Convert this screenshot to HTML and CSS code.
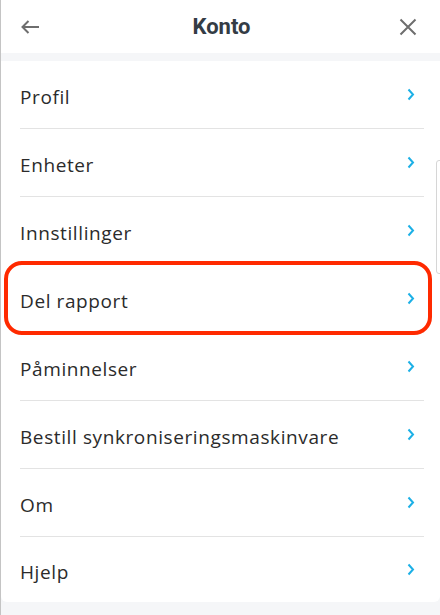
FILE: index.html
```html
<!DOCTYPE html>
<html lang="no">
<head>
<meta charset="utf-8">
<link rel="stylesheet" href="styles.css">
</head>
<body>
<div class="screen">
  <header class="topbar">
    <svg class="icon back" width="20" height="16" viewBox="0 0 20 16"><path d="M19 8H2.5M8.5 2 2.5 8l6 6" fill="none" stroke="#6e6e6e" stroke-width="2"/></svg>
    <h1 class="title">Konto</h1>
    <svg class="icon close" width="18" height="18" viewBox="0 0 18 18"><path d="M1.5 1.5l15 15M16.5 1.5l-15 15" fill="none" stroke="#6e6e6e" stroke-width="2"/></svg>
  </header>
  <div class="band"></div>
  <ul class="list">
    <li class="row"><span>Profil</span><svg class="chev" width="8" height="13" viewBox="0 0 8 13"><path d="M1.5 1.5 6 6.5l-4.5 5" fill="none" stroke="#1cb0e6" stroke-width="2"/></svg></li>
    <li class="row"><span>Enheter</span><svg class="chev" width="8" height="13" viewBox="0 0 8 13"><path d="M1.5 1.5 6 6.5l-4.5 5" fill="none" stroke="#1cb0e6" stroke-width="2"/></svg></li>
    <li class="row"><span>Innstillinger</span><svg class="chev" width="8" height="13" viewBox="0 0 8 13"><path d="M1.5 1.5 6 6.5l-4.5 5" fill="none" stroke="#1cb0e6" stroke-width="2"/></svg></li>
    <li class="row highlighted"><span>Del rapport</span><svg class="chev" width="8" height="13" viewBox="0 0 8 13"><path d="M1.5 1.5 6 6.5l-4.5 5" fill="none" stroke="#1cb0e6" stroke-width="2"/></svg></li>
    <li class="row"><span>Påminnelser</span><svg class="chev" width="8" height="13" viewBox="0 0 8 13"><path d="M1.5 1.5 6 6.5l-4.5 5" fill="none" stroke="#1cb0e6" stroke-width="2"/></svg></li>
    <li class="row"><span>Bestill synkroniseringsmaskinvare</span><svg class="chev" width="8" height="13" viewBox="0 0 8 13"><path d="M1.5 1.5 6 6.5l-4.5 5" fill="none" stroke="#1cb0e6" stroke-width="2"/></svg></li>
    <li class="row"><span>Om</span><svg class="chev" width="8" height="13" viewBox="0 0 8 13"><path d="M1.5 1.5 6 6.5l-4.5 5" fill="none" stroke="#1cb0e6" stroke-width="2"/></svg></li>
    <li class="row last"><span>Hjelp</span><svg class="chev" width="8" height="13" viewBox="0 0 8 13"><path d="M1.5 1.5 6 6.5l-4.5 5" fill="none" stroke="#1cb0e6" stroke-width="2"/></svg></li>
  </ul>
  <div class="scrollhint"></div>
</div>
</body>
</html>
```

FILE: styles.css
```css
html, body {
  margin: 0;
  padding: 0;
  background: #f5f6f8;
}
.screen {
  position: relative;
  width: 440px;
  height: 615px;
  box-sizing: border-box;
  border-left: 1px solid #c4c4c4;
  background: #f5f6f8;
  overflow: hidden;
}
.topbar {
  height: 53px;
  background: #fff;
  display: flex;
  align-items: center;
  justify-content: space-between;
  padding: 0 23px 0 19px;
}
.title {
  margin: 0;
  font-family: Roboto, "Liberation Sans", sans-serif;
  font-weight: 700;
  font-size: 22px;
  color: #343c45;
  transform: translateX(2px);
}
.icon { display: block; }
.band {
  height: 8px;
}
.list {
  list-style: none;
  margin: 0;
  padding: 0;
  background: #fff;
  border-radius: 0 0 6px 6px;
}
.row {
  position: relative;
  margin: 0 16px 0 19px;
  height: 67px;
  border-bottom: 1px solid #e3e3e3;
  display: flex;
  align-items: center;
  justify-content: space-between;
  padding-right: 9px;
  font-family: "Open Sans", "Noto Sans", sans-serif;
  font-size: 19px;
  font-weight: 400;
  letter-spacing: 0.6px;
  color: #2b2b2b;
}
.row span { padding-top: 4px; }
.row.last {
  border-bottom: none;
  height: 65px;
}
.highlighted::after {
  content: "";
  position: absolute;
  left: -16px;
  right: -8px;
  top: -4px;
  bottom: -3px;
  border: 4px solid #ff2a00;
  border-radius: 18px;
}
.scrollhint {
  position: absolute;
  right: -4px;
  top: 160px;
  width: 6px;
  height: 112px;
  border: 1px solid #d6d6d6;
  border-radius: 3px;
}
```
